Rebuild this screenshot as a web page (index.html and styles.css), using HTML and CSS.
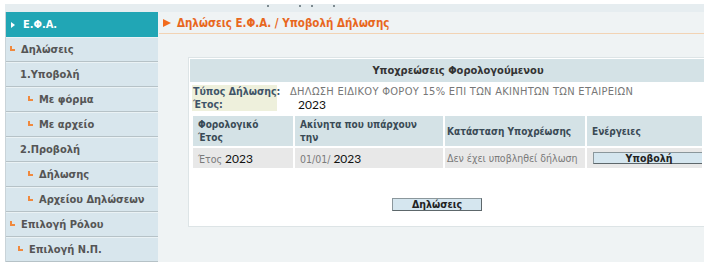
FILE: index.html
```html
<!DOCTYPE html>
<html lang="el">
<head>
  <meta charset="UTF-8">
  <meta name="viewport" content="width=device-width, initial-scale=1">
  <title>Δηλώσεις Ε.Φ.Α.</title>
  <link rel="stylesheet" href="styles.css">
</head>
<body>

<div class="topbar">
  <span class="speck s1"></span>
  <span class="speck s2"></span>
  <span class="speck s3"></span>
  <span class="speck s4"></span>
</div>

<div class="layout">
  <nav class="sidebar">
    <div class="nav-head"><span class="head-arrow"></span>Ε.Φ.Α.</div>
    <a class="nav-item lvl1"><span class="bullet"></span>Δηλώσεις</a>
    <a class="nav-item lvl2">1.Υποβολή</a>
    <a class="nav-item lvl3"><span class="bullet"></span>Με φόρμα</a>
    <a class="nav-item lvl3"><span class="bullet"></span>Με αρχείο</a>
    <a class="nav-item lvl2">2.Προβολή</a>
    <a class="nav-item lvl3"><span class="bullet"></span>Δήλωσης</a>
    <a class="nav-item lvl3"><span class="bullet"></span>Αρχείου Δηλώσεων</a>
    <a class="nav-item lvl1"><span class="bullet"></span>Επιλογή Ρόλου</a>
    <a class="nav-item lvl2b"><span class="bullet"></span>Επιλογή Ν.Π.</a>
  </nav>

  <main class="content">
    <div class="crumb"><span class="crumb-arrow"></span>Δηλώσεις Ε.Φ.Α. / Υποβολή Δήλωσης</div>

    <div class="panel">
      <div class="panel-title">Υποχρεώσεις Φορολογούμενου</div>

      <div class="info">
        <div class="info-label">Τύπος Δήλωσης:</div>
        <div class="info-value">ΔΗΛΩΣΗ ΕΙΔΙΚΟΥ ΦΟΡΟΥ 15% ΕΠΙ ΤΩΝ ΑΚΙΝΗΤΩΝ ΤΩΝ ΕΤΑΙΡΕΙΩΝ</div>
        <div class="info-label">Έτος:</div>
        <div class="info-value"><span class="num year">2023</span></div>
      </div>

      <table class="duties">
        <colgroup>
          <col class="c1">
          <col class="c2">
          <col class="c3">
          <col class="c4">
        </colgroup>
        <thead>
          <tr>
            <th class="narrow">Φορολογικό Έτος</th>
            <th>Ακίνητα που υπάρχουν την</th>
            <th class="nowrap">Κατάσταση Υποχρέωσης</th>
            <th>Ενέργειες</th>
          </tr>
        </thead>
        <tbody>
          <tr>
            <td>Έτος <span class="num">2023</span></td>
            <td>01/01/ <span class="num">2023</span></td>
            <td>Δεν έχει υποβληθεί δήλωση</td>
            <td><button class="btn btn-row" type="button">Υποβολή</button></td>
          </tr>
        </tbody>
      </table>

      <div class="actions">
        <button class="btn btn-main" type="button">Δηλώσεις</button>
      </div>
    </div>
  </main>
</div>

</body>
</html>
```

FILE: styles.css
```css
* {
  box-sizing: border-box;
  font-family: "DejaVu Sans Condensed", "DejaVu Sans", sans-serif;
}

body {
  margin: 0;
  background: white;
  width: 704px;
  height: 266px;
  overflow: hidden;
}

.topbar {
  position: relative;
  height: 12px;
  margin-left: 5px;
  border-top: 4px solid white;
  background: #e6edf0;
}

.speck {
  position: absolute;
  top: 1px;
  width: 2px;
  height: 2px;
  background: #7d8a90;
}
.s1 { left: 262px; }
.s2 { left: 294px; }
.s3 { left: 306px; }
.s4 { left: 328px; }

.layout {
  display: flex;
  height: 250px;
  margin-left: 5px;
}

/* left menu */
.sidebar {
  width: 153px;
  flex-shrink: 0;
  background: #d8e6ed;
  border-left: 1px solid #c9d3d8;
}

.nav-head {
  display: flex;
  align-items: center;
  height: 25px;
  padding-left: 5px;
  background: #21a6b5;
  color: white;
  font-size: 11px;
  font-weight: bold;
}

.head-arrow {
  width: 0;
  height: 0;
  margin-right: 8px;
  border-top: 3px solid transparent;
  border-bottom: 3px solid transparent;
  border-left: 4px solid white;
}

.nav-item {
  display: flex;
  align-items: center;
  height: 25px;
  border-top: 1px solid #eaf2f5;
  border-bottom: 1px solid #b6c2c7;
  color: #555;
  font-size: 11px;
  font-weight: bold;
  text-decoration: none;
}

.lvl1 { padding-left: 4px; }
.lvl2 { padding-left: 14px; }
.lvl2b { padding-left: 12px; }
.lvl3 { padding-left: 22px; }

.bullet {
  width: 5px;
  height: 5px;
  margin: -3px 6px 0 0;
  border-left: 2px solid #f0893e;
  border-bottom: 2px solid #f0893e;
}

/* main area */
.content {
  flex: 1;
  min-width: 0;
  background: #eff3f4;
  padding-left: 1px;
}

.crumb {
  display: flex;
  align-items: center;
  height: 22px;
  padding-left: 4px;
  border-bottom: 1px solid #f2d3b4;
  color: #e8671e;
  font-size: 11.5px;
  font-weight: bold;
}

.crumb-arrow {
  width: 0;
  height: 0;
  margin-right: 6px;
  border-top: 4px solid transparent;
  border-bottom: 4px solid transparent;
  border-left: 8px solid #f26b1d;
}

.panel {
  width: 530px;
  height: 170px;
  margin: 23px 0 0 29px;
  padding: 1px;
  background: white;
  border: 1px solid #dde4e6;
}

.panel-title {
  height: 23px;
  padding-left: 10px;
  background: #d4e2e6;
  color: #333;
  font-size: 11px;
  font-weight: bold;
  line-height: 23px;
  text-align: center;
}

.info {
  display: grid;
  grid-template-columns: 85px 1fr;
  grid-auto-rows: 13px;
  column-gap: 13px;
  margin: 3px 0 0 2px;
  font-size: 10.5px;
  line-height: 13px;
}

.info-label {
  padding-left: 1px;
  background: #eef0dc;
  color: #3f5468;
  font-weight: bold;
  white-space: nowrap;
}

.info-value {
  color: #777;
  font-size: 11px;
  letter-spacing: 0.3px;
  white-space: nowrap;
}

.num {
  font-family: Lato, sans-serif;
  font-size: 12px;
  letter-spacing: 0;
  color: #111;
}

.year {
  padding-left: 8px;
}

.duties {
  table-layout: fixed;
  width: 513px;
  margin: 3px 0 0 1px;
  border-spacing: 2px;
  font-size: 10.5px;
}

.c1 { width: 100px; }
.c2 { width: 148px; }
.c3 { width: 140px; }
.c4 { width: 115px; }

.duties th {
  height: 30px;
  padding: 0 5px;
  background: #d4e2e6;
  color: #3a4a55;
  font-size: 10px;
  font-weight: bold;
  text-align: left;
  line-height: 13px;
}

.duties th.narrow {
  padding-right: 20px;
}

.duties th.nowrap {
  padding-left: 2px;
  white-space: nowrap;
}

.duties td {
  height: 20px;
  padding: 0 3px 0 5px;
  background: #e8e8e8;
  color: #7a7a7a;
  white-space: nowrap;
  overflow: hidden;
}

.duties td:nth-child(3) {
  padding-left: 2px;
}

.duties td:last-child {
  padding-left: 6px;
  padding-right: 0;
}

.btn {
  height: 12px;
  padding: 0;
  background: #d5e6ef;
  border: 1px solid #8b979c;
  border-right-color: #5d676b;
  border-bottom-color: #5d676b;
  color: #222;
  font-size: 10.5px;
  font-weight: bold;
  line-height: 10px;
  cursor: pointer;
}

.btn-row {
  display: block;
  width: 112px;
}

.actions {
  width: 494px;
  margin-top: 23px;
  text-align: center;
}

.btn-main {
  width: 90px;
  height: 13px;
}
```
